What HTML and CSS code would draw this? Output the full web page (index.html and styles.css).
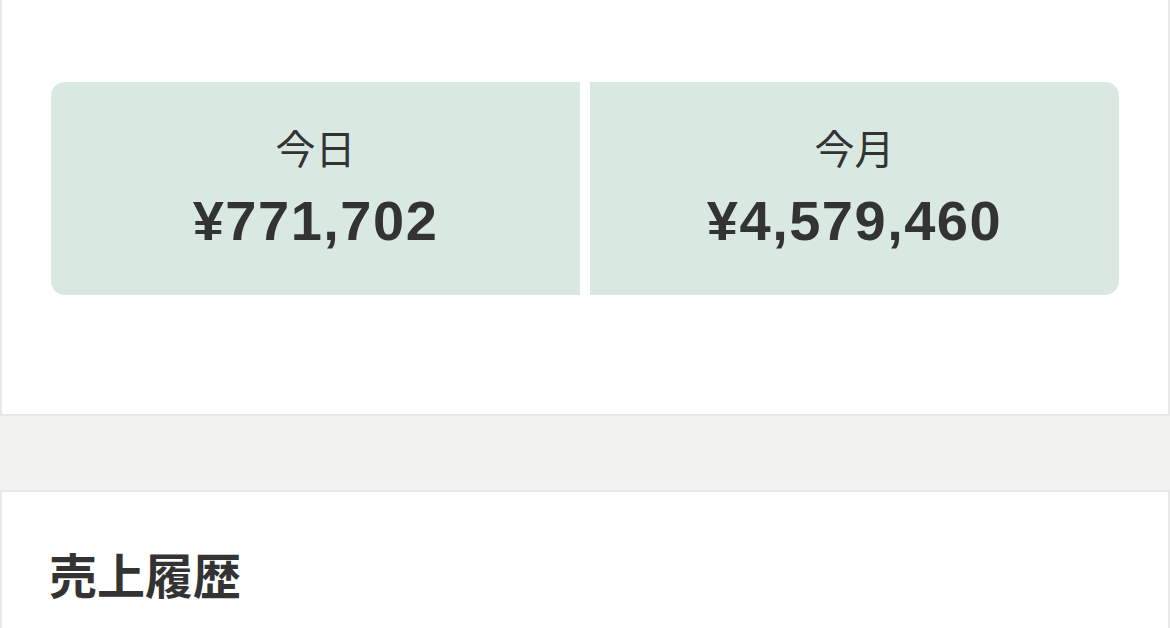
FILE: index.html
```html
<!DOCTYPE html>
<html lang="ja">
<head>
  <meta charset="UTF-8">
  <meta name="viewport" content="width=device-width, initial-scale=1.0">
  <title>売上</title>
  <link rel="stylesheet" href="styles.css">
</head>
<body>
  <div class="panel summary">
    <div class="stats-grid">
      <div class="stat-item">
        <div class="stat-label">今日</div>
        <div class="stat-value">¥771,702</div>
      </div>
      <div class="stat-item">
        <div class="stat-label">今月</div>
        <div class="stat-value">¥4,579,460</div>
      </div>
    </div>
  </div>

  <div class="spacer"></div>

  <div class="panel history">
    <div class="section-title">売上履歴</div>
  </div>
</body>
</html>
```

FILE: styles.css
```css
* {
  margin: 0;
  padding: 0;
  box-sizing: border-box;
}

body {
  width: 1170px;
  font-family: "Noto Sans CJK JP", "Noto Sans", sans-serif;
  background: #f2f3f1;
  color: #333;
}

.panel {
  background: white;
  border: 2px solid #e8e8e8;
}

.summary {
  border-top: none;
  height: 416px;
  padding: 82px 49px 0;
}

.stats-grid {
  display: grid;
  grid-template-columns: 1fr 1fr;
  gap: 10px;
}

.stat-item {
  height: 213px;
  padding-top: 41px;
  background: #d9e9e2;
  display: flex;
  flex-direction: column;
  align-items: center;
  gap: 17px;
}

.stat-item:first-child {
  border-radius: 14px 0 0 14px;
}

.stat-item:last-child {
  border-radius: 0 14px 14px 0;
}

.stat-label {
  font-size: 40px;
  line-height: 48px;
  font-weight: 400;
}

.stat-value {
  font-family: "Liberation Sans", Arial, sans-serif;
  font-size: 56px;
  line-height: 66px;
  font-weight: 700;
  letter-spacing: 1.5px;
}

.spacer {
  height: 74px;
}

.history {
  height: 200px;
  padding: 53px 47px 0;
}

.section-title {
  font-size: 48px;
  line-height: 57px;
  font-weight: 700;
}
```
